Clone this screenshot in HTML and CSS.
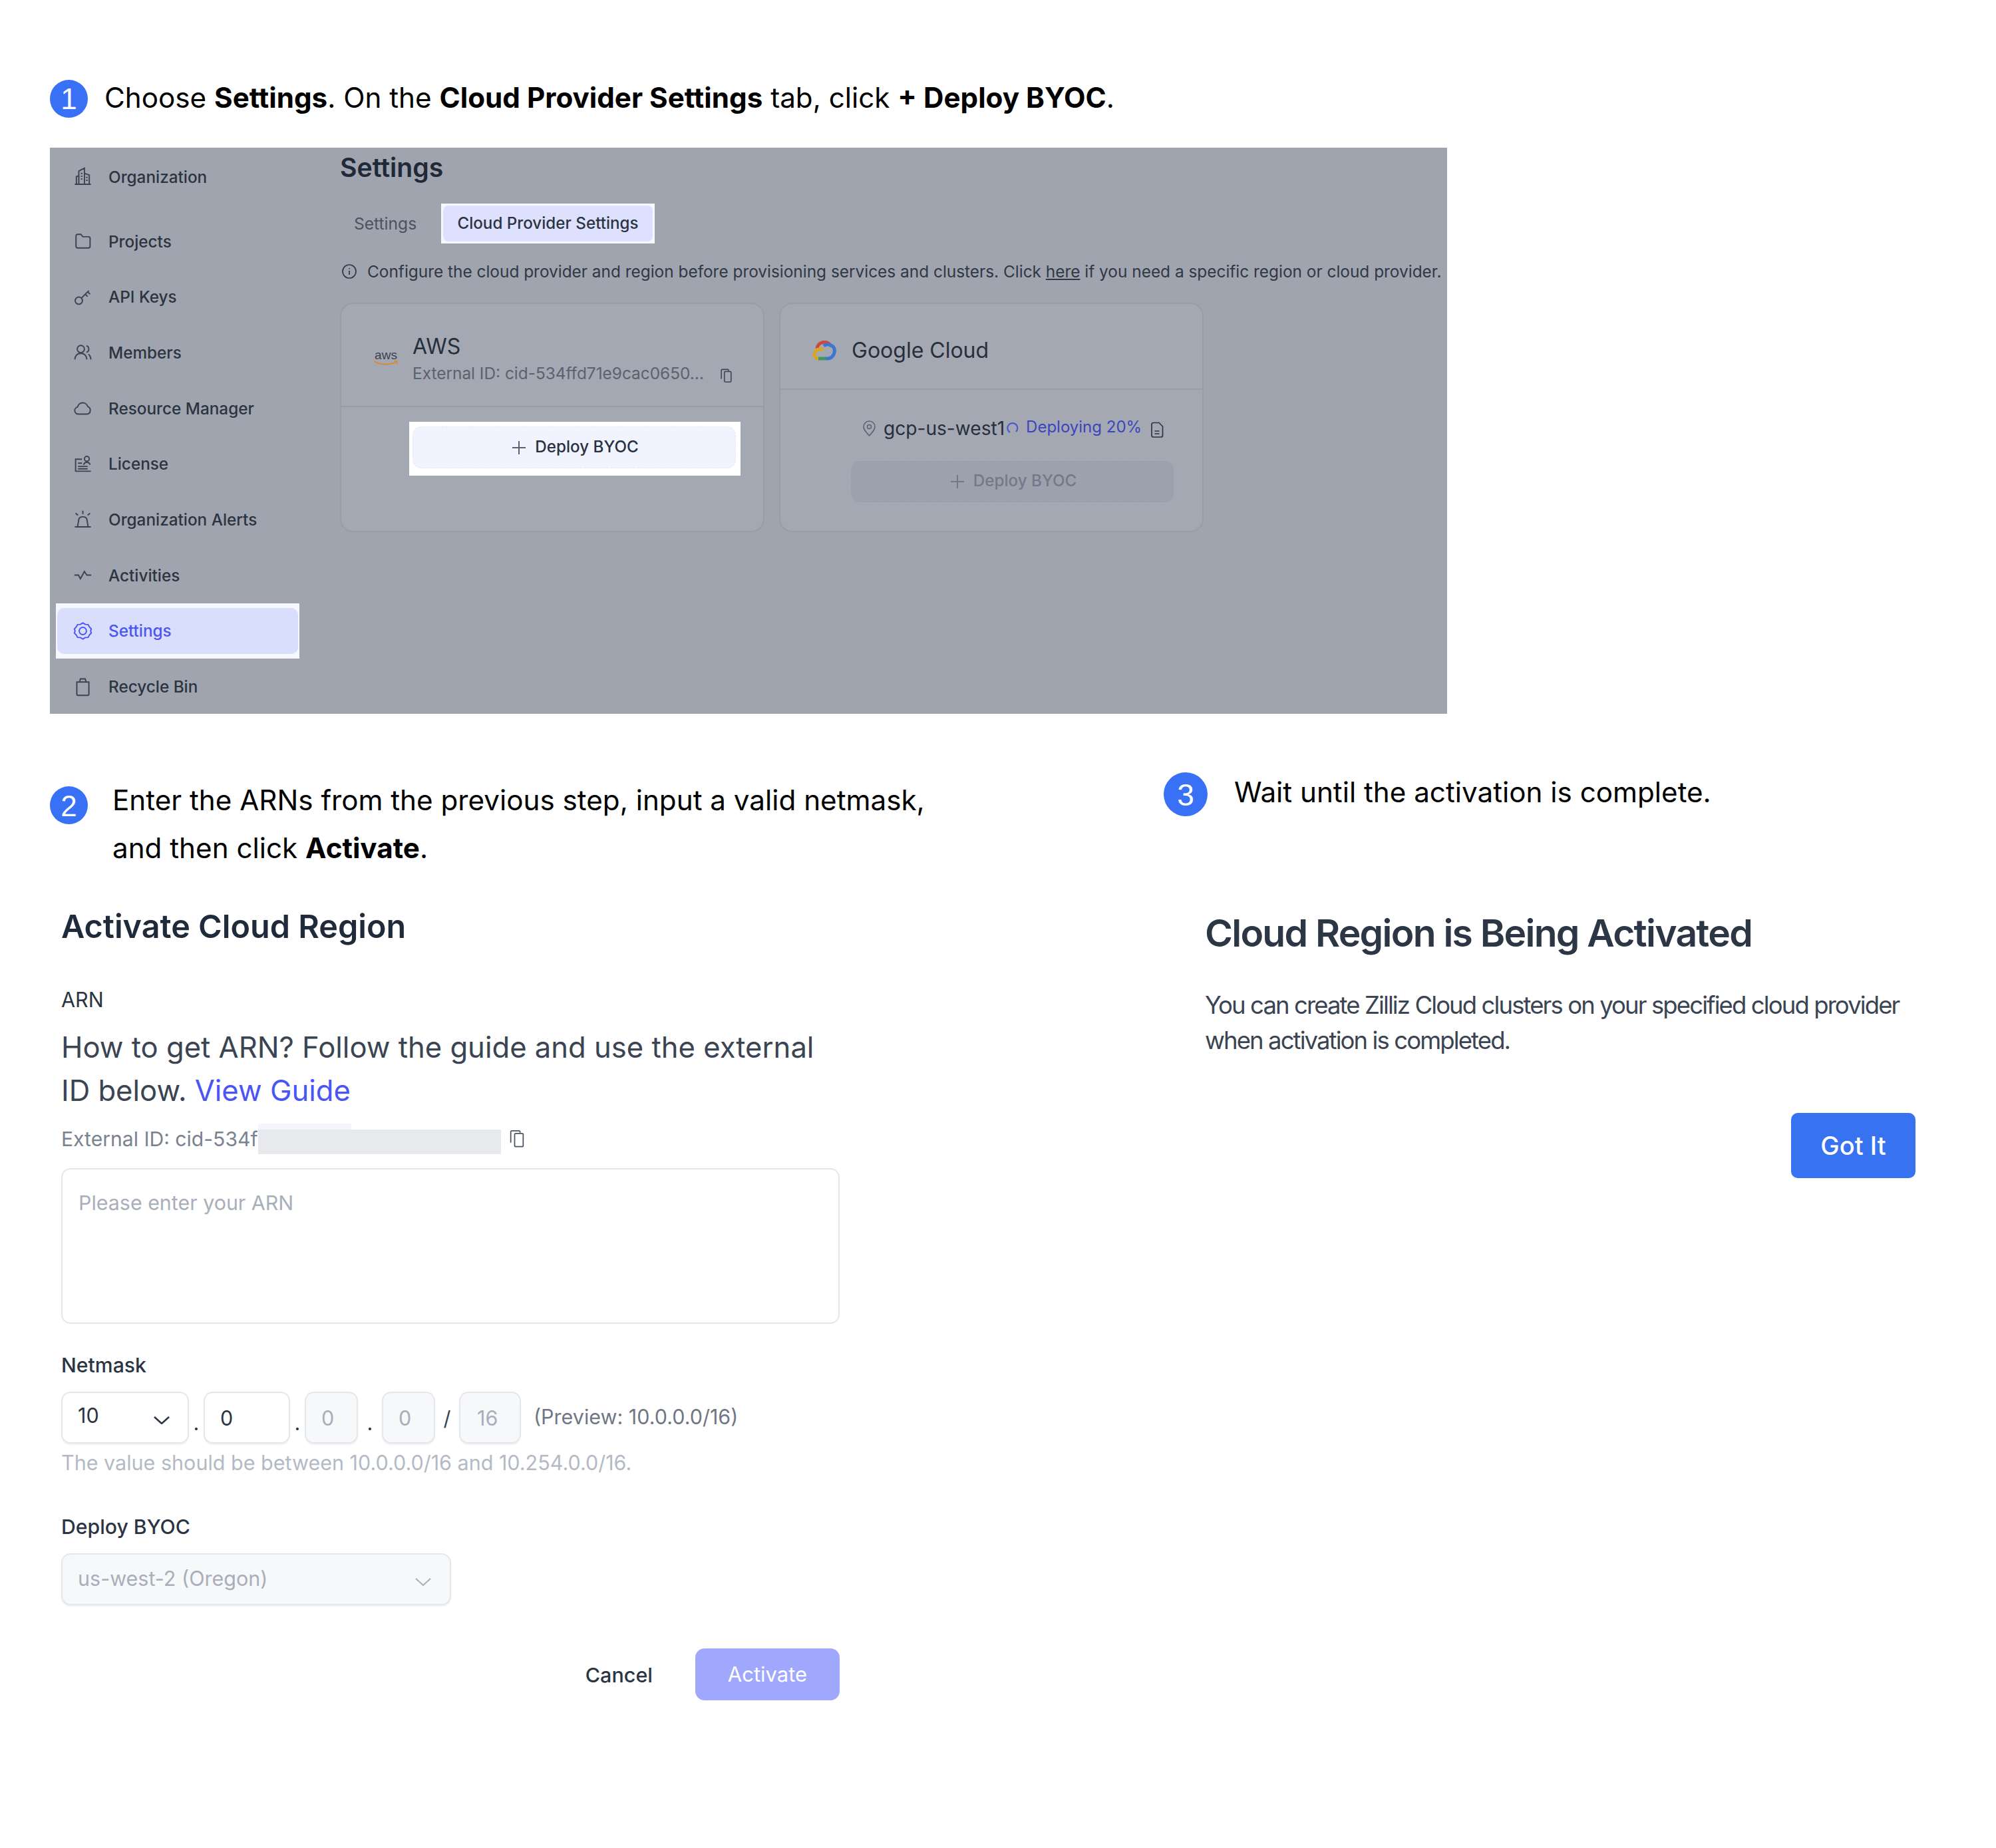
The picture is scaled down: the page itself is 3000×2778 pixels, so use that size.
FILE: index.html
```html
<!DOCTYPE html>
<html lang="en">
<head>
    <meta charset="UTF-8">
    <title>Activate Cloud Region</title>
    <link rel="stylesheet" href="styles.css">
</head>
<body>
    <div class="page">
        <div class="step step-one">
            <span class="badge">1</span>
            <p>Choose <b>Settings</b>. On the <b>Cloud Provider Settings</b> tab, click <b>+ Deploy BYOC</b>.</p>
        </div>

        <div class="shot">
            <ul class="nav">
                <li class="nav-item nav-first">
                    <svg class="nav-icon" viewBox="0 0 24 24"><path d="M2 21.500h20M4 21v-9l3-1M7 21V5l7-3.500V21M14 8l6 2v11M9.500 8h2M9.500 11.500h2M9.500 15h2M16 13h2M16 16.500h2"/></svg>
                    Organization
                </li>
                <li class="nav-item">
                    <svg class="nav-icon" viewBox="0 0 24 24"><path d="M3.500 5.500a2 2 0 0 1 2-2h4l2.500 3h7a2 2 0 0 1 2 2v10a2 2 0 0 1-2 2h-13.500a2 2 0 0 1-2-2z"/></svg>
                    Projects
                </li>
                <li class="nav-item">
                    <svg class="nav-icon" viewBox="0 0 24 24"><circle cx="7" cy="16.500" r="4.500"/><path d="M10.500 13l9-9M15 8.500l3 3M18 5.500l3 3"/></svg>
                    API Keys
                </li>
                <li class="nav-item">
                    <svg class="nav-icon" viewBox="0 0 24 24"><circle cx="9.500" cy="8" r="4.500"/><path d="M2 21c.5-5 3.500-7.500 7.500-7.500s7 2.500 7.500 7.500M16.500 3.800a4.500 4.500 0 0 1 0 8.400M19 14.500c1.800 1.400 2.800 3.600 3 6.500"/></svg>
                    Members
                </li>
                <li class="nav-item">
                    <svg class="nav-icon" viewBox="0 0 24 24"><path d="M6.500 19.500a4.500 4.500 0 0 1-1-8.900 6.500 6.500 0 0 1 12.600-.6 5 5 0 0 1-.6 9.500z"/></svg>
                    Resource Manager
                </li>
                <li class="nav-item">
                    <svg class="nav-icon" viewBox="0 0 24 24"><path d="M11 6H3v15h19M6 11h5M6 15h12M6 18h12"/><circle cx="17" cy="5.500" r="3"/><path d="M13 13c.5-2 2-3 4-3s3.500 1 4 3"/></svg>
                    License
                </li>
                <li class="nav-item">
                    <svg class="nav-icon" viewBox="0 0 24 24"><path d="M2 21.500h20M5.500 21l1.500-9c.5-2 2.500-3 5-3s4.500 1 5 3l1.500 9M12 1.500v4M3 4.500l3 2.500M21 4.500l-3 2.500"/></svg>
                    Organization Alerts
                </li>
                <li class="nav-item">
                    <svg class="nav-icon" viewBox="0 0 24 24"><path d="M1.500 12h5l2.500 4.500 5-9 3 4.500h5.500"/></svg>
                    Activities
                </li>
                <li class="nav-item active">
                    <div class="nav-inner">
                        <svg class="nav-icon" viewBox="0 0 24 24"><path d="M12 2l3 1.800 3.500.2 1.700 3 2.300 2.500-.8 2.500.8 2.500-2.300 2.500-1.700 3-3.500.2-3 1.800-3-1.800-3.500-.2-1.700-3-2.300-2.500.8-2.500-.8-2.500 2.300-2.500 1.700-3 3.500-.2z"/><circle cx="12" cy="12" r="4.500"/></svg>
                        Settings
                    </div>
                </li>
                <li class="nav-item">
                    <svg class="nav-icon" viewBox="0 0 24 24"><path d="M4.500 6h15v15a1.500 1.500 0 0 1-1.500 1.500h-12a1.500 1.500 0 0 1-1.500-1.500zM8 6l1-4h6l1 4"/></svg>
                    Recycle Bin
                </li>
            </ul>

            <div class="main">
                <h2 class="main-title">Settings</h2>
                <div class="tabs">
                    <span class="tab">Settings</span>
                    <span class="tab-on"><span>Cloud Provider Settings</span></span>
                </div>
                <div class="info">
                    <svg class="info-icon" viewBox="0 0 24 24"><circle cx="12" cy="12" r="10"/><path d="M12 11v6M12 7v1.500"/></svg>
                    <span>Configure the cloud provider and region before provisioning services and clusters. Click <u>here</u> if you need a specific region or cloud provider.</span>
                </div>
                <div class="cards">
                    <div class="card">
                        <div class="card-head aws-head">
                            <div class="aws-logo">
                                <span>aws</span>
                                <svg viewBox="0 0 38 9"><path d="M1 1c10 6 24 6 33 1" stroke="#d98a24" stroke-width="2"/><path d="M31 .5l5 .5-1 5" stroke="#d98a24" stroke-width="1.500"/></svg>
                            </div>
                            <div class="aws-text">
                                <div class="card-name">AWS</div>
                                <div class="aws-id">External ID: cid-534ffd71e9cac0650...
                                    <svg class="copy-sm" viewBox="0 0 20 24"><path d="M14 4V3a1.500 1.500 0 0 0-1.500-1.500h-9A1.500 1.500 0 0 0 2 3v14M7 6.500a1.500 1.500 0 0 1 1.500-1.500h8A1.500 1.500 0 0 1 18 6.500v14a1.500 1.500 0 0 1-1.500 1.500h-8A1.500 1.500 0 0 1 7 20.500z"/></svg>
                                </div>
                            </div>
                        </div>
                        <div class="deploy-wrap">
                            <div class="deploy">
                                <svg class="plus" viewBox="0 0 20 20"><path d="M10 0v20M0 10h20"/></svg>
                                Deploy BYOC
                            </div>
                        </div>
                    </div>
                    <div class="card card-dim">
                        <div class="card-head gcp-head">
                            <svg class="gcp-logo" viewBox="0 0 36 30">
                                <path d="M7 12a11 11 0 0 1 20-5" stroke="#c9493f" stroke-width="5"/>
                                <path d="M17 8a9 9 0 0 1 10-1c6 1 7 7 6 11-1 5-5 9-10 9h-3" stroke="#3f74d0" stroke-width="5"/>
                                <path d="M9 27h11" stroke="#3f9a5a" stroke-width="5"/>
                                <path d="M9 27c-4 0-6-3-6-6 0-4 3-8 8-8h6" stroke="#d8a624" stroke-width="5"/>
                            </svg>
                            <span class="card-name">Google Cloud</span>
                        </div>
                        <div class="region">
                            <svg class="pin" viewBox="0 0 21 24"><path d="M10.500 23C5 17 2 13.500 2 9.500a8.500 8.500 0 0 1 17 0c0 4-3 7.500-8.500 13.500z"/><circle cx="10.500" cy="9.500" r="3"/></svg>
                            <span class="region-name">gcp-us-west1</span>
                            <svg class="spinner" viewBox="0 0 18 18"><path d="M5 16A7.500 7.500 0 1 1 14 15"/></svg>
                            <span class="deploying">Deploying 20%</span>
                            <svg class="doc" viewBox="0 0 20 24"><path d="M2 4a2.500 2.500 0 0 1 2.500-2.500H13L18.500 7v13.500a2.500 2.500 0 0 1-2.500 2.500H4.500A2.500 2.500 0 0 1 2 20.500zM6.500 14h7M6.500 18h7"/></svg>
                        </div>
                        <div class="deploy deploy-off">
                            <svg class="plus" viewBox="0 0 20 20"><path d="M10 0v20M0 10h20"/></svg>
                            Deploy BYOC
                        </div>
                    </div>
                </div>
            </div>
        </div>

        <div class="lower">
            <div class="col-left">
                <div class="step step-two">
                    <span class="badge">2</span>
                    <p>Enter the ARNs from the previous step, input a valid netmask,<br>and then click <b>Activate</b>.</p>
                </div>
                <div class="form">
                    <h2 class="form-title">Activate Cloud Region</h2>
                    <div class="label label-arn">ARN</div>
                    <p class="guide">How to get ARN? Follow the guide and use the external ID below. <span class="link">View Guide</span></p>
                    <div class="ext">
                        <span>External ID: cid-534f</span>
                        <span class="redact"></span>
                        <svg class="copy" viewBox="0 0 20 24"><path d="M14 4V3a1.500 1.500 0 0 0-1.500-1.500h-9A1.500 1.500 0 0 0 2 3v14M7 6.500a1.500 1.500 0 0 1 1.500-1.500h8A1.500 1.500 0 0 1 18 6.500v14a1.500 1.500 0 0 1-1.500 1.500h-8A1.500 1.500 0 0 1 7 20.500z"/></svg>
                    </div>
                    <div class="textarea">Please enter your ARN</div>
                    <div class="label label-mask">Netmask</div>
                    <div class="mask">
                        <div class="field f-first"><span class="up">10</span><svg class="chev" viewBox="0 0 24 12"><path d="M1 1l11 10L23 1"/></svg></div>
                        <span class="sep sep-sm">.</span>
                        <div class="field f-second">0</div>
                        <span class="sep sep-sm">.</span>
                        <div class="field field-off f-third">0</div>
                        <span class="sep sep-lg">.</span>
                        <div class="field field-off f-third">0</div>
                        <span class="sep sep-lg sep-slash">/</span>
                        <div class="field field-off f-last">16</div>
                        <span class="preview">(Preview: 10.0.0.0/16)</span>
                    </div>
                    <div class="hint">The value should be between 10.0.0.0/16 and 10.254.0.0/16.</div>
                    <div class="label label-byoc">Deploy BYOC</div>
                    <div class="field field-off select-wide"><span class="up-sm">us-west-2 (Oregon)</span><svg class="chev chev-off" viewBox="0 0 24 12"><path d="M1 1l11 10L23 1"/></svg></div>
                    <div class="actions">
                        <span class="cancel">Cancel</span>
                        <span class="activate">Activate</span>
                    </div>
                </div>
            </div>
            <div class="col-right">
                <div class="step step-three">
                    <span class="badge badge-lg">3</span>
                    <p>Wait until the activation is complete.</p>
                </div>
                <div class="done">
                    <h2 class="done-title">Cloud Region is Being Activated</h2>
                    <p class="done-text">You can create Zilliz Cloud clusters on your specified cloud provider when activation is completed.</p>
                    <div class="done-actions"><span class="got">Got It</span></div>
                </div>
            </div>
        </div>
    </div>
</body>
</html>
```

FILE: styles.css
```css
* {
    box-sizing: border-box;
}

html,
body {
    margin: 0;
    padding: 0;
    background: #fff;
}

body {
    font-family: Inter, "Liberation Sans", sans-serif;
    color: #000;
}

p,
h2,
ul {
    margin: 0;
    padding: 0;
}

svg {
    fill: none;
    flex: none;
}

.page {
    width: 3000px;
    height: 2778px;
    padding: 120px 0 0 75px;
}

/* numbered steps */
.step {
    display: flex;
    align-items: flex-start;
    font-size: 42.2px;
}

.badge {
    flex: none;
    width: 57px;
    height: 57px;
    border-radius: 50%;
    background: #3871f5;
    color: #fff;
    font-family: "Liberation Sans", sans-serif;
    font-size: 44px;
    line-height: 57px;
    text-align: center;
}

.badge-lg {
    width: 66px;
    height: 66px;
    line-height: 68px;
    font-size: 46px;
}

.step-one {
    height: 57px;
    gap: 25px;
}

.step-one p {
    margin-top: -2px;
    line-height: 57px;
}

.step-two {
    gap: 37px;
}

.step-two .badge {
    margin-top: 14px;
    line-height: 60px;
}

.step-two p {
    margin-top: -1px;
    line-height: 72px;
}

.step-three {
    gap: 40px;
}

.step-three p {
    line-height: 60px;
}

/* screenshot panel */
.shot {
    display: flex;
    width: 2100px;
    height: 851px;
    margin-top: 45px;
    padding-top: 2px;
    background: #a0a4af;
    color: #2b3441;
}

.nav {
    width: 436px;
    flex: none;
    list-style: none;
    padding-left: 9px;
}

.nav-item {
    display: flex;
    align-items: center;
    gap: 24px;
    width: 366px;
    height: 83.7px;
    padding-left: 26px;
    font-size: 24.3px;
    font-weight: 500;
}

.nav-first {
    margin-bottom: 13px;
}

.nav-icon {
    width: 29px;
    height: 29px;
    stroke: #3a4352;
    stroke-width: 1.6;
}

.nav-item.active {
    padding: 7px 2px;
    background: #f7f8ff;
    color: #4a55f5;
}

.nav-inner {
    display: flex;
    align-items: center;
    gap: 24px;
    width: 100%;
    height: 100%;
    padding-left: 24px;
    border-radius: 10px;
    background: #d9defc;
}

.active .nav-icon {
    stroke: #4a55f5;
}

.main {
    flex: 1;
    min-width: 0;
}

.main-title {
    height: 50px;
    margin-top: 3px;
    font-size: 39.2px;
    font-weight: 600;
    line-height: 50px;
    color: #1f2937;
}

.tabs {
    display: flex;
    align-items: center;
    height: 60px;
    margin-top: 29px;
    font-size: 24.6px;
}

.tab {
    width: 152px;
    padding-left: 21px;
    color: #4a5361;
}

.tab-on {
    display: block;
    width: 321px;
    height: 60px;
    padding: 3px;
    background: #f7f8ff;
}

.tab-on span {
    display: block;
    height: 54px;
    border-radius: 8px;
    background: #dde1fd;
    font-size: 24.2px;
    font-weight: 500;
    text-align: center;
    line-height: 54px;
}

.info {
    display: flex;
    align-items: center;
    gap: 15px;
    height: 40px;
    margin-top: 22px;
    padding-left: 2px;
    font-size: 24.4px;
    white-space: nowrap;
    color: #2f3845;
}

.info-icon {
    width: 24px;
    height: 24px;
    stroke: #2f3845;
    stroke-width: 1.7;
}

.cards {
    display: flex;
    gap: 22px;
    margin-top: 27px;
}

.card {
    width: 638px;
    height: 345px;
    border: 2px solid #999da8;
    border-radius: 20px;
    background: #a4a8b2;
}

.card-head {
    display: flex;
    border-bottom: 2px solid #999da8;
}

.card-name {
    font-size: 32px;
    line-height: 40px;
    color: #262f3c;
}

.aws-head {
    align-items: flex-start;
    height: 155px;
    padding: 44px 0 0 48px;
    gap: 21px;
}

.aws-logo {
    width: 38px;
    margin-top: 25px;
    text-align: center;
    font-family: "Liberation Sans", sans-serif;
    font-size: 19px;
    line-height: 16px;
    color: #3a4352;
}

.aws-logo svg {
    display: block;
    width: 38px;
    height: 9px;
}

.aws-text {
    white-space: nowrap;
}

.aws-id {
    display: flex;
    align-items: center;
    gap: 24px;
    font-size: 24.4px;
    line-height: 40px;
    color: #5a6270;
}

.copy-sm {
    width: 19px;
    height: 22px;
    margin-top: 8px;
    stroke: #3a4352;
    stroke-width: 1.7;
}

.deploy-wrap {
    width: 498px;
    height: 81px;
    margin: 22px 0 0 102px;
    padding: 7px 7px 11px 5px;
    background: #fff;
}

.deploy {
    display: flex;
    align-items: center;
    justify-content: center;
    gap: 14px;
    height: 63px;
    padding: 0 0 3px 4px;
    border: 1px dashed #e5e7f0;
    border-radius: 14px;
    background: #f1f3fe;
    font-size: 24.2px;
    font-weight: 500;
    color: #29313e;
}

.plus {
    width: 20px;
    height: 20px;
    margin-top: 3px;
    stroke: #5a6270;
    stroke-width: 2;
}

.gcp-head {
    align-items: center;
    gap: 23px;
    height: 129px;
    padding: 12px 0 0 48px;
}

.gcp-logo {
    width: 36px;
    height: 30px;
}

.region {
    display: flex;
    align-items: center;
    height: 36px;
    margin: 40px 0 0 123px;
    white-space: nowrap;
}

.pin {
    width: 21px;
    height: 24px;
    stroke: #5a6270;
    stroke-width: 1.5;
}

.region-name {
    margin-left: 11px;
    font-size: 28.1px;
    color: #262f3c;
}

.spinner {
    width: 18px;
    height: 18px;
    margin: -3px 0 0 3px;
    stroke: #4a5cc8;
    stroke-width: 2.2;
}

.deploying {
    margin: -6px 0 0 11px;
    font-size: 24px;
    color: #3b45c0;
}

.doc {
    width: 20px;
    height: 24px;
    margin: 4px 0 0 13px;
    stroke: #2b3441;
    stroke-width: 1.7;
}

.deploy-off {
    width: 485px;
    height: 62px;
    margin: 31px 0 0 106px;
    border-color: #9a9eab;
    background: #9da1ae;
    color: #747989;
}

.deploy-off .plus {
    stroke: #747989;
}

/* lower half */
.lower {
    display: flex;
    margin-top: 77px;
}

.col-left {
    width: 1674px;
    padding-top: 18px;
}

.col-right {
    flex: 1;
    padding-top: 11px;
}

.form {
    width: 1187px;
    padding-left: 17px;
    color: #2a3442;
}

.form-title {
    margin-top: 52px;
    font-size: 48.5px;
    font-weight: 600;
    line-height: 60px;
    color: #1f2a3a;
}

.label {
    font-size: 30.2px;
    font-weight: 500;
    line-height: 40px;
}

.label-arn {
    margin-top: 60px;
    font-weight: 400;
    font-size: 30.5px;
}

.label-mask {
    margin-top: 42px;
}

.label-byoc {
    margin-top: 56px;
}

.guide {
    margin-top: 19px;
    font-size: 43.6px;
    line-height: 65px;
    color: #3a4452;
}

.link {
    color: #4a55f5;
}

.ext {
    display: flex;
    align-items: center;
    height: 40px;
    margin-top: 20px;
    font-size: 30.1px;
    color: #7a8290;
}

.redact {
    position: relative;
    width: 365px;
    height: 37px;
    margin-top: 8px;
    background: #e8e9ed;
}

.redact::before {
    content: "";
    position: absolute;
    left: 0;
    bottom: 100%;
    width: 140px;
    height: 9px;
    background: #f4f5fe;
}

.copy {
    width: 26px;
    height: 28px;
    margin-left: 11px;
    stroke: #4a5361;
    stroke-width: 1.5;
}

.textarea {
    height: 234px;
    margin-top: 24px;
    padding: 30px 24px;
    border: 2px solid #e5e7eb;
    border-radius: 14px;
    font-size: 30.4px;
    line-height: 40px;
    color: #a9afba;
}

.mask {
    display: flex;
    align-items: center;
    margin-top: 20px;
}

.field {
    display: flex;
    align-items: center;
    height: 78px;
    padding-left: 23px;
    border: 2px solid #e5e7eb;
    border-radius: 14px;
    background: #fff;
    box-shadow: 0 2px 2px #eef0f3;
    font-size: 30.5px;
}

.f-first {
    justify-content: space-between;
    width: 192px;
    padding-right: 27px;
}

.up {
    margin-top: -8px;
}

.up-sm {
    margin-top: -4px;
}

.f-second {
    width: 130px;
}

.f-third {
    width: 80px;
    padding-left: 23px;
}

.f-last {
    width: 93px;
    padding-left: 25px;
}

.field-off {
    background: #f7f8fa;
    color: #a9afba;
}

.sep {
    text-align: center;
    margin-top: 14px;
    font-size: 30.5px;
}

.sep-sm {
    width: 22px;
}

.sep-lg {
    width: 36px;
}

.sep-slash {
    margin-top: 0;
    color: #3a4452;
}

.preview {
    margin: -4px 0 0 19px;
    font-size: 30.5px;
    color: #6f7785;
}

.chev {
    width: 24px;
    height: 12px;
    margin-top: 8px;
    stroke: #2a3442;
    stroke-width: 2.5;
}

.chev-off {
    stroke: #a9afba;
    stroke-width: 2;
}

.hint {
    margin-top: 9px;
    font-size: 30.5px;
    line-height: 40px;
    color: #b4bac5;
}

.label + .field {
    margin-top: 20px;
}

.select-wide {
    justify-content: space-between;
    width: 586px;
    padding-right: 28px;
}

.actions {
    display: flex;
    align-items: center;
    justify-content: flex-end;
    gap: 64px;
    margin-top: 65px;
}

.cancel {
    font-size: 30.5px;
    font-weight: 500;
}

.activate {
    width: 217px;
    height: 78px;
    border-radius: 14px;
    background: #a0a8fd;
    color: #fff;
    font-size: 31px;
    line-height: 78px;
    text-align: center;
}

.done {
    width: 1130px;
    padding-left: 62px;
}

.done-title {
    margin-top: 141px;
    font-size: 57px;
    font-weight: 600;
    line-height: 70px;
    letter-spacing: -1.75px;
    color: #2c3645;
}

.done-text {
    margin-top: 47px;
    font-size: 36.5px;
    line-height: 53px;
    letter-spacing: -1.9px;
    color: #3a4452;
}

.done-actions {
    display: flex;
    justify-content: flex-end;
    margin-top: 82px;
}

.got {
    width: 187px;
    height: 98px;
    border-radius: 10px;
    background: #3772f0;
    color: #fff;
    font-size: 38px;
    font-weight: 500;
    line-height: 98px;
    text-align: center;
}
```
